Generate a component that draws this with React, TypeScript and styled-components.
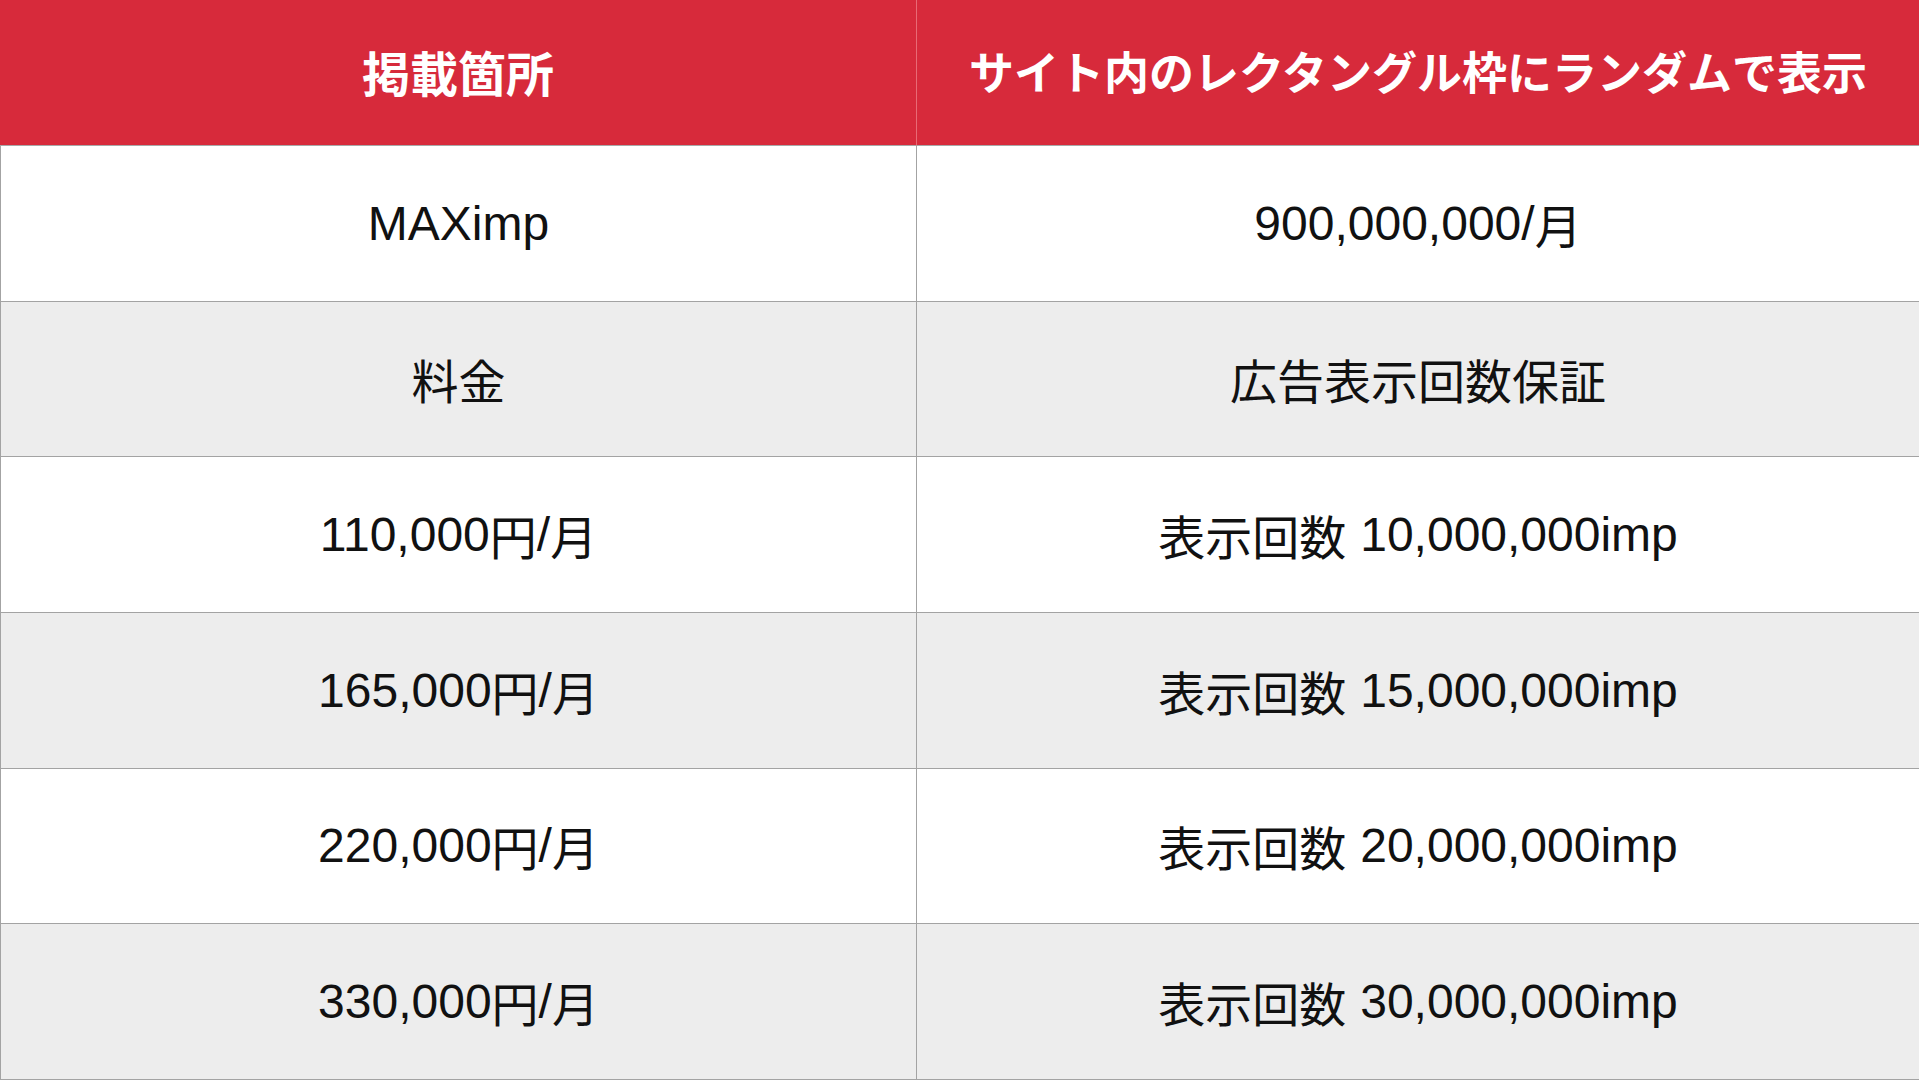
import React from "react";
import styled, { createGlobalStyle } from "styled-components";

const GlobalStyle = createGlobalStyle`
  html, body {
    margin: 0;
    padding: 0;
    background: #ffffff;
  }
  body {
    font-family: "Liberation Sans", "Noto Sans CJK JP", sans-serif;
  }
`;

const Table = styled.div`
  display: grid;
  grid-template-columns: 917px 1fr;
  grid-template-rows: 146px repeat(6, 1fr);
  width: 100%;
  height: 100vh;
  overflow: hidden;
`;

const HeadCell = styled.div<{ $first?: boolean }>`
  display: flex;
  align-items: center;
  justify-content: center;
  background: #d72a3b;
  color: #ffffff;
  font-family: "Noto Sans CJK JP", "Liberation Sans", sans-serif;
  font-weight: 700;
  font-size: ${(p) => (p.$first ? "48px" : "45px")};
  border-bottom: 1px solid #a8a8a8;
  border-right: ${(p) => (p.$first ? "1px solid #e86a75" : "none")};
  padding-bottom: 4px;
  box-sizing: border-box;
  white-space: nowrap;
`;

const Cell = styled.div<{ $shade: boolean; $first?: boolean }>`
  display: flex;
  align-items: center;
  justify-content: center;
  background: ${(p) => (p.$shade ? "#ededed" : "#ffffff")};
  color: #111111;
  font-size: 48px;
  border-bottom: 1px solid #a3a3a3;
  border-left: ${(p) => (p.$first ? "1px solid #a3a3a3" : "none")};
  border-right: ${(p) => (p.$first ? "1px solid #a3a3a3" : "none")};
  box-sizing: border-box;
  white-space: nowrap;
`;

const Jp = styled.span<{ $gap?: boolean }>`
  font-family: "Noto Sans CJK JP", sans-serif;
  font-size: 47px;
  margin-right: ${(p) => (p.$gap ? "14px" : "0")};
`;

const Count = ({ n }: { n: string }) => (
  <>
    <Jp $gap>表示回数</Jp>
    {n}imp
  </>
);

const Price = ({ n }: { n: string }) => (
  <>
    {n}
    <Jp>円</Jp>/<Jp>月</Jp>
  </>
);

const rows: [React.ReactNode, React.ReactNode][] = [
  ["MAXimp", <>900,000,000/<Jp>月</Jp></>],
  [<Jp>料金</Jp>, <Jp>広告表示回数保証</Jp>],
  [<Price n="110,000" />, <Count n="10,000,000" />],
  [<Price n="165,000" />, <Count n="15,000,000" />],
  [<Price n="220,000" />, <Count n="20,000,000" />],
  [<Price n="330,000" />, <Count n="30,000,000" />],
];

export default function App() {
  return (
    <>
      <GlobalStyle />
      <Table>
        <HeadCell $first>掲載箇所</HeadCell>
        <HeadCell>サイト内のレクタングル枠にランダムで表示</HeadCell>
        {rows.map(([left, right], i) => (
          <React.Fragment key={i}>
            <Cell $shade={i % 2 === 1} $first>
              {left}
            </Cell>
            <Cell $shade={i % 2 === 1}>{right}</Cell>
          </React.Fragment>
        ))}
      </Table>
    </>
  );
}
